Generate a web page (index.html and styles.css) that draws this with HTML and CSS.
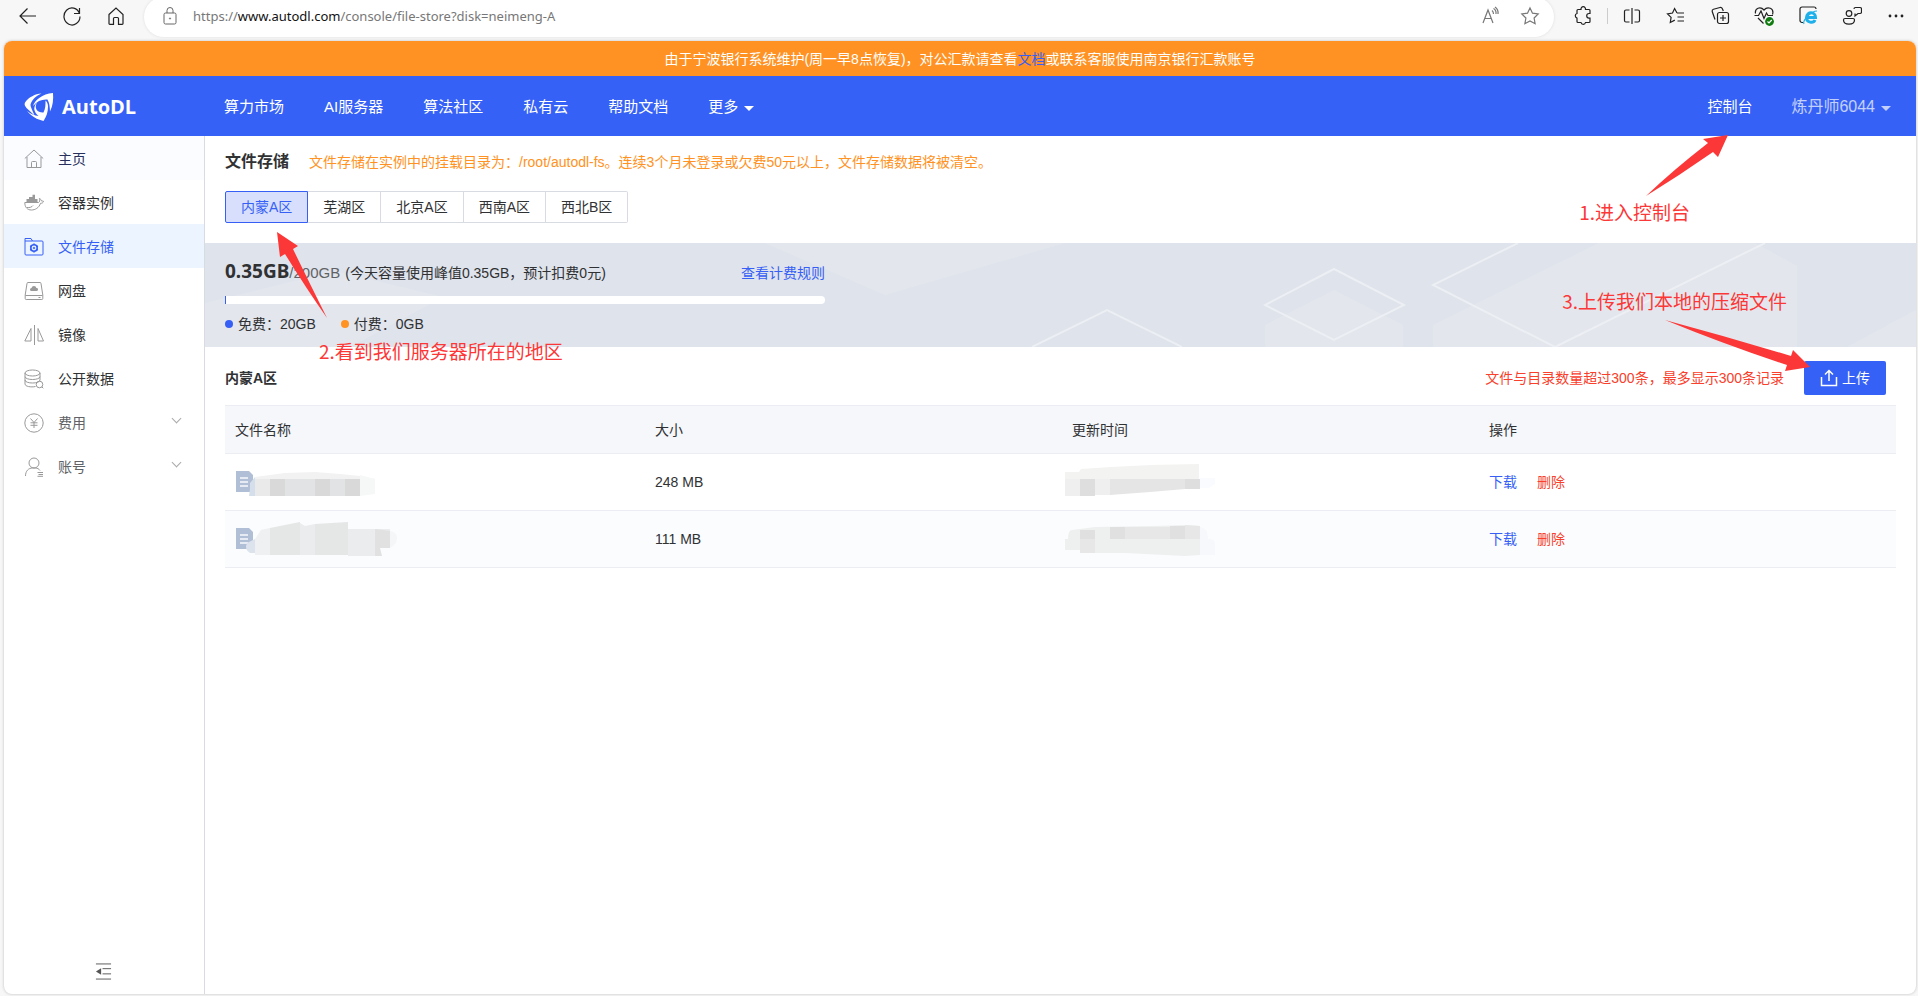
FILE: index.html
```html
<!DOCTYPE html>
<html lang="zh-CN">
<head>
<meta charset="utf-8">
<title>AutoDL 文件存储</title>
<link rel="stylesheet" href="styles.css">
</head>
<body>
<div class="browser-bar">
  <div class="browser-nav">
    <button class="tool" aria-label="后退"><svg viewBox="0 0 20 20"><path d="M18 10H2.500M9.500 2.500 2 10l7.500 7.500"/></svg></button>
    <button class="tool" aria-label="刷新"><svg viewBox="0 0 20 20"><path d="M17.500 7.500A8 8.500 0 1 0 18 10.500M17.500 2v5.500H12"/></svg></button>
    <button class="tool" aria-label="主页"><svg viewBox="0 0 20 20"><path d="M3 8.500 10 2l7 6.500V17.500a.8.8 0 0 1-.8.800H12.500V12.500a1 1 0 0 0-1-1h-3a1 1 0 0 0-1 1v5.800H3.800a.8.8 0 0 1-.8-.8Z"/></svg></button>
  </div>
  <div class="address">
    <svg class="address-icon" viewBox="0 0 20 20"><rect x="4" y="7" width="12" height="11" rx="1.500"/><path d="M7 7V4.500a3 3 0 0 1 6 0V7"/><circle cx="10" cy="12.500" r=".6"/></svg>
    <div class="address-text" role="textbox" aria-label="地址">https://<b>www.autodl.com</b>/console/file-store?disk=neimeng-A</div>
    <button class="tool tool-muted" aria-label="朗读"><svg viewBox="0 0 20 20"><path d="M3 17 8 4l5 13M4.700 12.500h6.600M12 4.500c1 .8 1.500 2 1.500 3.500M13.500 2.500c1.800 1 2.800 3 2.500 5.500M15 1c2.200 1.500 3.400 4 3 7"/></svg></button>
    <button class="tool tool-muted" aria-label="收藏"><svg viewBox="0 0 20 20"><path d="m10 2 2.500 5.200 5.700.8-4.100 4 1 5.700L10 15l-5.100 2.700 1-5.700L1.800 8l5.700-.8Z"/></svg></button>
  </div>
  <div class="browser-tools">
    <button class="tool" aria-label="扩展"><svg viewBox="0 0 20 20"><path d="M5 3.500h3a2.300 2.300 0 1 1 4.500 0H16a1 1 0 0 1 1 1v3h-1a2.300 2.300 0 0 0 0 4.600h1v3.400a1 1 0 0 1-1 1h-3.500a2.300 2.300 0 0 1-4.500 0H5a1 1 0 0 1-1-1v-3.400a2.400 2.400 0 0 1 0-4.600v-3a1 1 0 0 1 1-1Z"/></svg></button>
    <i class="divider"></i>
    <button class="tool" aria-label="分屏"><svg viewBox="0 0 20 20"><path d="M7.500 4H4a1.500 1.500 0 0 0-1.500 1.500v9A1.500 1.500 0 0 0 4 16h3.500M12.500 4H16a1.500 1.500 0 0 1 1.500 1.500v9A1.500 1.500 0 0 1 16 16h-3.500M10 2v16"/></svg></button>
    <button class="tool" aria-label="收藏夹"><svg viewBox="0 0 20 20"><path d="M11 7 8.600 2.500 6.500 7l-5 .8 3.600 3.600-.8 5.100 4.500-2.400M11 7h7M11.500 11h6.500M11.500 15h6.500"/></svg></button>
    <button class="tool" aria-label="集锦"><svg viewBox="0 0 20 20"><rect x="7.500" y="6.500" width="11" height="11" rx="2"/><path d="M13 9v6M10 12h6M5 13.500 2.200 5.500a2 2 0 0 1 1.300-2.300L10 1.500a2 2 0 0 1 2.500 1.500l.8 2"/></svg></button>
    <button class="tool" aria-label="浏览器概要"><svg viewBox="0 0 20 20"><path d="M1.500 7.500C.5 2 6.500 0 10 4 13.500 0 20.500 2 18.500 8.500M.5 9.500h4l2.500-4.500 3 7.500 2.500-5.500L14 9.500h5M4 12l5.500 5.500"/><circle cx="15.500" cy="15.500" r="4.400" class="badge"/><path d="m13.500 15.500 1.500 1.500 2.700-3" class="badge-tick"/></svg></button>
    <button class="tool" aria-label="IE 模式"><svg viewBox="0 0 20 20"><path d="M5 16.500H4A2 2 0 0 1 2 14.500V3a2 2 0 0 1 2-2h12a2 2 0 0 1 2 2"/><path d="M8.500 11.500h9c0-6-8.500-6.500-9 0 0 5.500 7 6 8.500 2.500" class="ie"/><path d="M6 18c-2-3 7-13 13-13" class="ie-ring"/></svg></button>
    <button class="tool" aria-label="反馈"><svg viewBox="0 0 20 20"><circle cx="7" cy="7.500" r="2.800"/><path d="M3 12.500h8a1.500 1.500 0 0 1 1.500 1.500c0 5.500-11 5.500-11 0A1.500 1.500 0 0 1 3 12.500ZM12 3a1.500 1.500 0 0 1 1.500-1.500H18A1.500 1.500 0 0 1 19.500 3v3A1.500 1.500 0 0 1 18 7.500h-2L13 10V7.500"/></svg></button>
    <button class="tool" aria-label="更多"><svg viewBox="0 0 20 20"><g class="dots"><circle cx="4" cy="10" r="1.400"/><circle cx="10" cy="10" r="1.400"/><circle cx="16" cy="10" r="1.400"/></g></svg></button>
  </div>
</div>

<div class="app">
  <div class="notice">由于宁波银行系统维护(周一早8点恢复)，对公汇款请查看<a href="#">文档</a>或联系客服使用南京银行汇款账号</div>
  <header class="header">
    <a class="logo" href="#">
      <svg viewBox="0 0 30 30"><path d="M17.500 1.500C11 2 5 5 1 10.500c-1 2 0 3.500 1.500 5.500l8 7.500C8.500 18 6.500 15.500 6.500 12.500c1.500-5 5.500-8.500 11-11Z"/><path d="M9 14C11 8 18 2 29 1c.5 6.500 0 12.500-3 18.500-.2-5-.5-8.500-2.500-12C18 7 13 9 9 14Z"/><path d="M13 10.500C9.500 17 14 21 19.500 20.500c2-4 2-7.500 2-12 1.800 1.500 2.500 3.500 2.500 6 0 5.500-1.500 10-4.500 14.500C13 27.500 8 24.500 3 19c4 3 7.500 4.500 11.500 5C10 20 8.500 15.500 13 10.500Z"/></svg>
      <span>AutoDL</span>
    </a>
    <nav class="menu">
      <a href="#">算力市场</a><a href="#">AI服务器</a><a href="#">算法社区</a><a href="#">私有云</a><a href="#">帮助文档</a><a href="#">更多<i class="caret"></i></a>
    </nav>
    <div class="account"><a href="#">控制台</a><button class="user">炼丹师6044<i class="caret"></i></button></div>
  </header>

  <div class="body">
    <aside class="sidebar">
      <a class="item item-hover" href="#"><svg viewBox="0 0 20 20"><path d="M.8 9.500 10 1l9.200 8.500M3 8v10.500h14V8M7.500 18.500v-5a1 1 0 0 1 1-1h3a1 1 0 0 1 1 1v5"/></svg>主页</a>
      <a class="item" href="#"><svg viewBox="0 0 20 20"><path d="M.8 9.500h13.700c1.300-.5 1.500-2.500.8-4 1.500.5 2 1.500 2.200 2.500 1 0 1.500 0 2 .3-.3 1.500-1.500 2-3 2C15 15 11 17 7.500 17 3 17 .8 14 .8 9.500ZM3 14.500c2.500.5 5-.5 6-2"/><path class="solid" d="M2.500 6h11v3.500h-11ZM5 4h6v2H5ZM8.500 1.800H11V4H8.500Z"/></svg>容器实例</a>
      <a class="item active" href="#"><svg viewBox="0 0 20 20"><path d="M1 17V1.500h6L8.500 4H18a1 1 0 0 1 1 1v12a1 1 0 0 1-1 1H2a1 1 0 0 1-1-1ZM1 4h7.500"/><circle cx="10" cy="11" r="3.200" stroke-width="1.600"/><circle cx="10" cy="11" r=".8"/><path stroke-width="1.600" d="M10 6.500v1.300M10 14.200v1.300M6.200 8.800l1.100.7M12.700 12.500l1.100.7M6.200 13.200l1.100-.7M12.700 9.500l1.100-.7"/></svg>文件存储</a>
      <a class="item" href="#"><svg viewBox="0 0 20 20"><path d="M4 1.500h12a1 1 0 0 1 1 1l1.800 11.500v3.500a1 1 0 0 1-1 1H2.200a1 1 0 0 1-1-1V14L3 2.500a1 1 0 0 1 1-1ZM1.500 14.500h17M14.500 16.500h2"/><path class="solid" d="M7.500 10a1.500 1.500 0 0 1 0-3 2.500 2.500 0 0 1 4.900 0 1.500 1.500 0 0 1 .3 3Z"/></svg>网盘</a>
      <a class="item" href="#"><svg viewBox="0 0 20 20"><path d="M10.500 0v20M7 3.500V16H.8ZM14 3.500V16h5.500Z"/></svg>镜像</a>
      <a class="item" href="#"><svg viewBox="0 0 20 20"><ellipse cx="8.500" cy="4" rx="7.500" ry="3"/><path d="M1 4v3.500c0 4 15 4 15 0V4M1 7.500V11c0 4 15 4 15 0V7.500M1 11v4c0 2.500 6 3.500 10.500 2.500"/><circle cx="15.500" cy="15.500" r="3.300"/><path d="m17.800 17.800 1.500 1.500"/></svg>公开数据</a>
      <a class="item group" href="#"><svg viewBox="0 0 20 20"><circle cx="10" cy="10" r="9.200"/><path d="m6.500 5.500 3.500 4 3.500-4M10 9.500V15M6.500 9.800h7M6.500 12.300h7"/></svg>费用<i class="chevron"></i></a>
      <a class="item group" href="#"><svg viewBox="0 0 20 20"><circle cx="10" cy="6" r="5"/><path d="M1.500 19c0-5 3-8 7-8h3c2 0 3.500 1 4.500 2.500M13.500 15.500h5.500M14.500 17.500h4.500M13.500 19.300h5.500"/></svg>账号<i class="chevron"></i></a>
      <button class="collapse" aria-label="收起菜单"><svg viewBox="0 0 18 18"><path d="M1 1h16M8 6h9M8 11.500h9M1 17h16"/><path class="solid" d="M6.500 5.500v7L1 9Z"/></svg></button>
    </aside>

    <main class="main">
      <div class="heading"><h1>文件存储</h1><p>文件存储在实例中的挂载目录为：/root/autodl-fs。连续3个月未登录或欠费50元以上，文件存储数据将被清空。</p></div>
      <div class="regions"><button class="region selected">内蒙A区</button><button class="region">芜湖区</button><button class="region">北京A区</button><button class="region">西南A区</button><button class="region">西北B区</button></div>
      <section class="storage">
        <svg class="storage-art" viewBox="0 0 1711 104" preserveAspectRatio="xMaxYMin slice">
          <g fill="#fff" fill-opacity=".14">
            <path d="M0 60 130 28 238 54 145 104H0ZM560 0H860L680 52Z"/>
            <path d="M1060 82 1129 47 1198 82V104H1060Z"/>
            <path d="M1228 82 1394 0H1550L1592 23V104H1228ZM1260 104 1500 30 1592 80V104ZM1642 104 1711 67V104Z"/>
          </g>
          <g fill="none" stroke="#eff1f5" stroke-width="2" stroke-opacity=".8">
            <path d="M827 104 902 67 977 104M1129 26 1060 62 1129 97 1199 62ZM1313 0 1228 42 1350 104 1560 0"/>
          </g>
        </svg>
        <div class="storage-body">
          <div class="usage"><strong>0.35GB</strong><span class="quota">/200GB</span><span class="peak">(今天容量使用峰值0.35GB，预计扣费0元)</span><a href="#">查看计费规则</a></div>
          <div class="bar"><div class="bar-fill"></div></div>
          <div class="legend"><span><i class="dot"></i>免费：20GB</span><span><i class="dot dot-paid"></i>付费：0GB</span></div>
        </div>
      </section>
      <section class="files">
        <div class="files-head"><h2>内蒙A区</h2><p>文件与目录数量超过300条，最多显示300条记录</p><button class="upload"><svg viewBox="0 0 18 18"><path d="M1.500 8v8.500h15V8M9 12V2M5 5.500 9 1.500l4 4"/></svg>上传</button></div>
        <table>
          <thead><tr><th class="name-col">文件名称</th><th>大小</th><th>更新时间</th><th>操作</th></tr></thead>
          <tbody>
            <tr>
              <td><svg class="mosaic" viewBox="0 0 170 40"><path fill="#b0bfd5" d="M1 9h13l4 4v17H1Z"/><path stroke="#e6ebf3" stroke-width="2" d="M5 16h8M5 20h8M5 24h8"/><path fill="#d5deeb" d="M20 15l-5 6v6l-1 7h6Z"/><path fill="#f2f2f2" d="M20 15 50 11 80 10 105 12 125 14 140 17H20Z"/><path fill="#eaeaea" d="M20 17h15v17H20Z"/><path fill="#d9d9d9" d="M35 17h15v17H35ZM80 17h15v17H80ZM110 17h15v17h-15Z"/><path fill="#e2e3e5" d="M50 17h30v17H50ZM95 17h15v17H95Z"/><path fill="#f6f8f8" d="M125 13l15 4v15l-15 2Z"/></svg></td>
              <td>248 MB</td>
              <td><svg class="mosaic time" viewBox="0 0 170 40"><path fill="#f3f3f2" d="M2 10h14l2-3 30-2 40-2 48-1v16H2Z"/><path fill="#efefef" d="M2 17h15v17H2ZM32 17h15v16H32Z"/><path fill="#dedede" d="M17 17h15v17H17ZM122 17h15v10h-15Z"/><path fill="#e5e5e6" d="M47 17h75v10l-35 3-40 3Z"/><path fill="#fafbfe" d="M137 16h15v6l-6 4h-9Z"/></svg></td>
              <td><a href="#">下载</a><a class="danger" href="#">删除</a></td>
            </tr>
            <tr>
              <td><svg class="mosaic" viewBox="0 0 170 40"><path fill="#b0bfd5" d="M1 9h13l4 4v17H1Z"/><path stroke="#e6ebf3" stroke-width="2" d="M5 16h8M5 20h8M5 24h8"/><path fill="#dce3ed" d="M20 20l-8 4q-3 6 3 10h5Z"/><path fill="#eef0f1" d="M20 20 26 11l9-2v27H20Z"/><path fill="#e5e6e6" d="M35 9 65 3v33H35ZM80 5l33-2v33H80Z"/><path fill="#ebeced" d="M65 4l5 3 10-2v31H65ZM113 10h42v10h-15v17h-27Z"/><path fill="#e1e1e1" d="M140 10l15 2v17h-10l2 8h-7Z"/><path fill="#f5f6f7" d="M155 12q8 2 7 8t-7 9Z"/></svg></td>
              <td>111 MB</td>
              <td><svg class="mosaic time" viewBox="0 0 170 40"><path fill="#eeefef" d="M5 20q0-9 4-9l8-1 15-2 60-1 30-1 15 1v29l-15 1-60-3H22l-3-3H2V20Z"/><path fill="#e0e0e1" d="M17 11h15v9H17ZM47 8h15v12H47ZM107 7h15v13h-15Z"/><path fill="#e7e7e7" d="M17 20h15v14H17ZM62 8h45v12H62ZM122 6l15 1v13h-15Z"/><path fill="#f7f8fb" d="M137 8q8 1 8 12 7 0 7 4v12h-15Z"/></svg></td>
              <td><a href="#">下载</a><a class="danger" href="#">删除</a></td>
            </tr>
          </tbody>
        </table>
      </section>
    </main>
  </div>
</div>

<div class="note note-console"><svg viewBox="0 0 90 70"><path d="M84 1 59 5l5 4Q28 37 2 62 36 41 69 18l5 5Z"/></svg><span>1.进入控制台</span></div>
<div class="note note-region"><svg viewBox="0 0 60 95"><path d="M7 2 28 16l-5 3Q38 50 57 88 36 58 15 24l-5 3Z"/></svg><span>2.看到我们服务器所在的地区</span></div>
<div class="note note-upload"><span>3.上传我们本地的压缩文件</span><svg viewBox="0 0 150 55"><path d="M148 48 131 31l-2 6Q66 18 3 1 64 26 125 46l-2 6Z"/></svg></div>
</body>
</html>
```
FILE: styles.css
```css
* { box-sizing: border-box; }
body {
  margin: 0;
  min-height: 100vh;
  display: flex;
  flex-direction: column;
  position: relative;
  background: #f7f7f7;
  color: #303133;
  font: 14px/20px "Liberation Sans", "Noto Sans CJK SC", sans-serif;
}
a { color: #365ff5; text-decoration: none; }
button { font: inherit; border: 0; background: none; padding: 0; cursor: pointer; }
h1, h2, p { margin: 0; }
svg { flex: none; fill: none; stroke: currentColor; }

.browser-bar { display: flex; height: 41px; padding: 0 12px 0 18px; overflow: hidden; }
.browser-nav, .browser-tools { display: flex; gap: 24px; height: 32px; align-items: center; }
.browser-tools { margin-left: 19px; }
.tool { width: 20px; height: 20px; color: #222; }
.tool svg { display: block; width: 20px; height: 20px; stroke-width: 1.2; }
.tool-muted { color: #777; }
.divider { width: 1px; height: 16px; margin: 0 -10px; background: #ccc; }
.dots { fill: #222; stroke: none; }
.badge { fill: #107c10; stroke: none; }
.badge-tick { stroke: #fff; }
.ie { stroke: #1eb0ea; stroke-width: 3; }
.ie-ring { stroke: #1eb0ea; }
.address {
  flex: 1;
  display: flex;
  align-items: center;
  gap: 20px;
  height: 40px;
  margin: -3px 0 0 18px;
  padding: 0 14px 2px 16px;
  border-radius: 20px;
  background: #fff;
  box-shadow: 0 0 3px #ddd;
}
.address-icon { width: 20px; height: 20px; color: #666; }
.address-text { flex: 1; margin-left: -7px; color: #777; font: 13px/20px "Noto Sans", sans-serif; }
.address-text b { font-weight: 400; color: #111; }

.app {
  flex: 1;
  display: flex;
  flex-direction: column;
  margin: 0 2px 2px 4px;
  border-radius: 8px;
  overflow: hidden;
  background: #fff;
  box-shadow: 0 0 3px #bbb;
}
.notice { height: 35px; padding-top: 1px; background: #ff9222; color: #fff; text-align: center; line-height: 34px; }
.header { display: flex; align-items: center; height: 60px; padding: 2px 25px 0 20px; background: #3661f6; color: #fff; font-size: 15px; }
.header a { color: #fff; }
.logo { display: flex; align-items: center; gap: 8px; width: 200px; font: 700 20px/24px "Open Sans", sans-serif; }
.logo svg { width: 30px; height: 30px; fill: #fff; stroke: none; }
.menu { display: flex; flex: 1; gap: 40px; }
.caret { display: inline-block; margin-left: 6px; vertical-align: 1px; border: 5px solid transparent; border-top-color: currentColor; border-bottom: 0; }
.account { display: flex; gap: 39px; }
.user { color: #fff; opacity: .7; font-size: 16px; }

.body { flex: 1; display: flex; }
.sidebar { display: flex; flex-direction: column; width: 201px; border-right: 1px solid #d9dbe3; }
.item { display: flex; align-items: center; gap: 14px; height: 44px; padding: 2px 20px 0; color: #303133; }
.item svg { width: 20px; height: 20px; color: #999; }
.item .solid, .collapse .solid { fill: currentColor; stroke: none; }
.item-hover { background: #fafcff; color: #27305c; }
.active { background: #ecf5ff; color: #365ff5; }
.item.active svg { color: #365ff5; }
.group { color: #606266; }
.chevron { width: 7px; height: 7px; margin: 0 4px 10px auto; border: solid #aaa; border-width: 0 1px 1px 0; transform: rotate(45deg); }
.collapse { margin: auto auto 14px 91px; color: #555; }
.collapse svg { display: block; width: 17px; height: 17px; }

.main { flex: 1; min-width: 0; }
.heading { display: flex; align-items: center; gap: 20px; padding: 15px 20px 0; line-height: 22px; }
h1 { font-size: 16px; line-height: 22px; }
.heading p { color: #ff9222; }
.regions { display: flex; padding: 18px 20px 20px; }
.region { height: 32px; padding: 0 15px; border: 1px solid #d9dbe3; border-left-width: 0; background: #fff; color: #303133; }
.region:last-child { border-radius: 0 2px 2px 0; }
.selected { border: 1px solid #365ff5; border-radius: 2px 0 0 2px; background: #d7dffd; color: #365ff5; }

.storage { position: relative; background: #dfe3eb; }
.storage-art { position: absolute; width: 100%; height: 100%; stroke: none; }
.storage-body { position: relative; width: 640px; padding: 16px 20px 13px; }
.usage { display: flex; align-items: baseline; height: 26px; line-height: 24px; }
.usage strong { font: 700 19px/24px "Noto Sans", sans-serif; }
.quota { color: #606266; font-size: 15px; }
.peak { flex: 1; margin-left: 5px; }
.bar { height: 8px; margin: 11px 0 10px; border-radius: 0 4px 4px 0; background: #fff; }
.bar-fill { width: 1px; height: 8px; background: #365ff5; }
.legend { display: flex; gap: 25px; }
.legend span { display: flex; align-items: center; gap: 5px; }
.dot { width: 8px; height: 8px; border-radius: 50%; background: #365ff5; }
.dot-paid { background: #ff9222; }

.files { padding: 14px 20px 0; }
.files-head { display: flex; align-items: center; padding: 0 10px 10px 0; }
h2 { flex: 1; font-size: 14px; line-height: 20px; }
.files-head p { color: #f8402c; }
.upload { display: flex; align-items: center; gap: 4px; height: 34px; margin-left: 20px; padding: 0 16px; border-radius: 2px; background: #3661f6; color: #fff; }
.upload svg { width: 18px; height: 18px; stroke-width: 1.5; }
table { width: 100%; border-collapse: collapse; table-layout: fixed; border-top: 1px solid #ebedf2; }
th, td { height: 57px; padding: 0 10px; border-bottom: 1px solid #ebedf2; text-align: left; font-weight: 400; }
th { height: 48px; background: #f5f7fb; }
.name-col { width: 420px; }
tbody tr:nth-child(2) { background: #fafcfe; }
td a { margin-right: 20px; }
td .danger { color: #f8402c; }
.mosaic { display: block; width: 170px; height: 40px; stroke: none; }
.time { margin-left: -9px; }

.note { position: absolute; display: flex; flex-direction: column; color: #fc3737; font: 19px/24px "Noto Sans CJK SC", sans-serif; }
.note svg { fill: #fc3737; stroke: none; }
.note-console { top: 134px; right: 228px; }
.note-console svg { align-self: flex-end; width: 90px; height: 70px; margin: 0 -44px -4px 0; }
.note-region { top: 230px; left: 319px; gap: 21px; }
.note-region svg { width: 60px; height: 95px; margin: 0 0 -7px -49px; }
.note-upload { top: 289px; right: 131px; }
.note-upload svg { align-self: flex-end; width: 150px; height: 55px; margin: 6px -25px 0 0; }
```
